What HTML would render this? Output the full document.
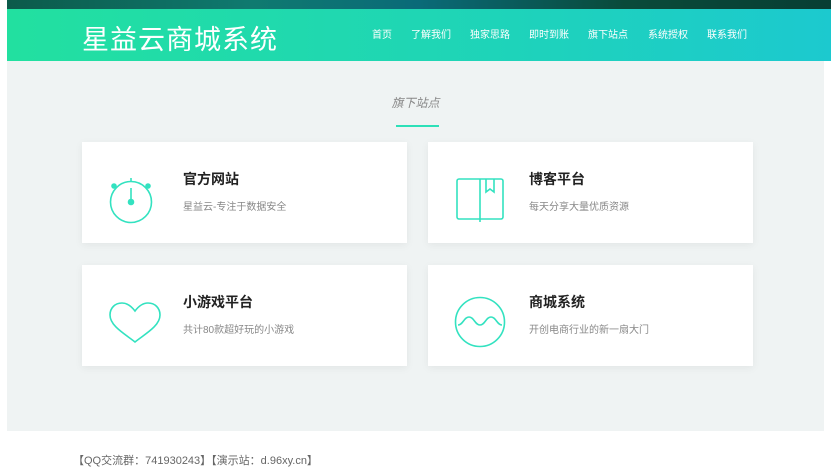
<!DOCTYPE html>
<html><head><meta charset="utf-8"><style>
*{margin:0;padding:0;box-sizing:border-box}
body{width:831px;height:462px;overflow:hidden;background:#fff;font-family:"Liberation Sans","Noto Sans CJK SC",sans-serif;position:relative}
.top{position:absolute;left:7px;top:0;width:824px;height:9px;background:linear-gradient(90deg,#0c5a4a,#0f7a70 30%,#0a6a78 50%,#0a4a3a 75%,#083e34)}
.hdr{position:absolute;left:7px;top:9px;width:824px;height:52px;background:linear-gradient(90deg,#22e0a0,#1fd6b4 50%,#1cc9cf)}
.logo{position:absolute;left:75px;top:9px;font-size:27px;color:#fff;letter-spacing:1px;white-space:nowrap}
.nav span{position:absolute;top:17px;font-size:10px;color:#fff;white-space:nowrap}
.main{position:absolute;left:7px;top:61px;width:817px;height:370px;background:#eff3f3}
.h{position:absolute;left:0;width:831px;top:94px;text-align:center;font-size:12px;font-style:italic;color:#888}
.ul{position:absolute;left:396px;top:125px;width:43px;height:2px;background:#2de0b8}
.card{position:absolute;width:325px;height:101px;background:#fff;box-shadow:0 2px 8px rgba(0,0,0,0.06)}
.card b{position:absolute;left:101px;top:27px;font-size:14px;color:#222}
.card p{position:absolute;left:101px;top:56px;font-size:10px;color:#888;white-space:nowrap}
.card svg{position:absolute}
.ft{position:absolute;left:73px;top:452px;font-size:11px;color:#666}
</style></head><body>
<div class="top"></div>
<div class="hdr">
<div class="logo">星益云商城系统</div>
<div class="nav"><span style="left:365px">首页</span><span style="left:404px">了解我们</span><span style="left:463px">独家思路</span><span style="left:522px">即时到账</span><span style="left:581px">旗下站点</span><span style="left:641px">系统授权</span><span style="left:700px">联系我们</span></div>
</div>
<div class="main"></div>
<div class="h">旗下站点</div>
<div class="ul"></div>
<div class="card" style="left:82px;top:142px">
<svg style="left:24px;top:34px" width="50" height="50" viewBox="0 0 50 50" fill="none" stroke="#33e2c0" stroke-width="1.6"><circle cx="25" cy="26" r="20.5"/><line x1="25" y1="2" x2="25" y2="6"/><line x1="25" y1="12" x2="25" y2="26"/><circle cx="25" cy="26" r="2.5" fill="#33e2c0"/><circle cx="8" cy="10" r="2" fill="#33e2c0"/><circle cx="42" cy="10" r="2" fill="#33e2c0"/></svg>
<b>官方网站</b><p>星益云-专注于数据安全</p></div>
<div class="card" style="left:428px;top:142px">
<svg style="left:28px;top:35px" width="48" height="46" viewBox="0 0 48 46" fill="none" stroke="#33e2c0" stroke-width="1.6"><rect x="1" y="2" width="46" height="40" rx="2"/><line x1="24" y1="2" x2="24" y2="45"/><path d="M30 2v13l4-3 4 3V2"/></svg>
<b>博客平台</b><p>每天分享大量优质资源</p></div>
<div class="card" style="left:82px;top:265px">
<svg style="left:27px;top:37px" width="52" height="42" viewBox="0 0 52 42" fill="none" stroke="#33e2c0" stroke-width="1.6"><path d="M26 40C16 32 1 24 1 13 1 6 6 1 13 1c6 0 10 4 13 8 3-4 7-8 13-8 7 0 12 5 12 12 0 11-15 19-25 27z"/></svg>
<b>小游戏平台</b><p>共计80款超好玩的小游戏</p></div>
<div class="card" style="left:428px;top:265px">
<svg style="left:26px;top:31px" width="52" height="52" viewBox="0 0 52 52" fill="none" stroke="#33e2c0" stroke-width="1.6"><circle cx="26" cy="26" r="24.5"/><path d="M4 29c5 0 6-8 11-8s6 8 11 8 6-8 11-8 6 8 11 8" /></svg>
<b>商城系统</b><p>开创电商行业的新一扇大门</p></div>
<div class="ft">【QQ交流群：741930243】【演示站：d.96xy.cn】</div>
</body></html>
